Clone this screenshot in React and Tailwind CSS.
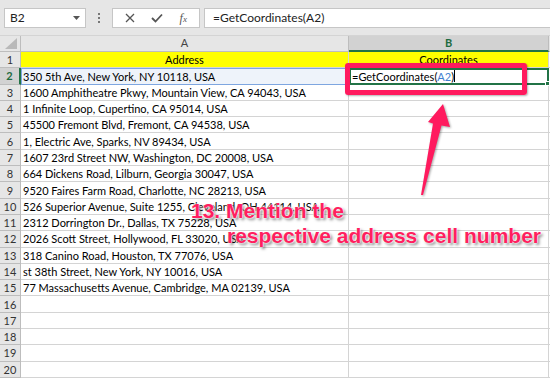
const rows = [
  "350 5th Ave, New York, NY 10118, USA",
  "1600 Amphitheatre Pkwy, Mountain View, CA 94043, USA",
  "1 Infinite Loop, Cupertino, CA 95014, USA",
  "45500 Fremont Blvd, Fremont, CA 94538, USA",
  "1, Electric Ave, Sparks, NV 89434, USA",
  "1607 23rd Street NW, Washington, DC 20008, USA",
  "664 Dickens Road, Lilburn, Georgia 30047, USA",
  "9520 Faires Farm Road, Charlotte, NC 28213, USA",
  "526 Superior Avenue, Suite 1255, Cleveland, OH 44114, USA",
  "2312 Dorrington Dr., Dallas, TX 75228, USA",
  "2026 Scott Street, Hollywood, FL 33020, USA",
  "318 Canino Road, Houston, TX 77076, USA",
  "st 38th Street, New York, NY 10016, USA",
  "77 Massachusetts Avenue, Cambridge, MA 02139, USA",
  "",
  "",
  "",
  "",
  "",
];

function Toolbar() {
  return (
    <div className="h-[36px] bg-[#e6e6e6] border-b border-[#d4d4d4] flex items-start pt-2 pl-1 text-[#222]">
      <div className="w-[82px] h-[20px] bg-white border border-[#c6c6c6] flex items-center justify-between pl-[5px] pr-[5px] text-[12px]">
        <span>B2</span>
        <svg width="7" height="4" viewBox="0 0 7 4">
          <path d="M0 0 L7 0 L3.5 4 Z" fill="#555" />
        </svg>
      </div>
      <div className="w-[26px] h-[20px] flex flex-col items-center justify-center gap-[2px]">
        <span className="w-[2px] h-[2px] bg-[#777]" />
        <span className="w-[2px] h-[2px] bg-[#777]" />
        <span className="w-[2px] h-[2px] bg-[#777]" />
      </div>
      <div className="w-[88px] h-[20px] bg-white border border-[#c6c6c6] flex items-center justify-around px-1">
        <svg width="10" height="10" viewBox="0 0 10 10">
          <path d="M1 1 L9 9 M9 1 L1 9" stroke="#555" strokeWidth="1.3" />
        </svg>
        <svg width="12" height="10" viewBox="0 0 12 10">
          <path d="M1 5 L4.5 8.5 L11 1.5" stroke="#555" strokeWidth="1.8" fill="none" />
        </svg>
        <span className="font-['Liberation_Serif'] italic text-[12px] text-[#555] leading-none">
          f<span className="text-[9px]">x</span>
        </span>
      </div>
      <div className="flex-1 h-[20px] ml-[4px] bg-white border border-[#c6c6c6] border-r-0 flex items-center pl-[8px] text-[12px]">
        =GetCoordinates(A2)
      </div>
    </div>
  );
}

function HeaderRow() {
  return (
    <div className="h-[16px] flex bg-[#e6e6e6] text-[11px]">
      <div className="w-[21px] border-r border-b border-[#bdbdbd] relative">
        <svg className="absolute right-[3px] bottom-[2px]" width="12" height="11" viewBox="0 0 12 11">
          <path d="M12 0 L12 11 L0 11 Z" fill="#b9b9b9" />
        </svg>
      </div>
      <div className="w-[328px] border-r border-b border-[#bdbdbd] flex items-center justify-center text-[#444]">
        A
      </div>
      <div className="w-[200px] bg-[#d2d2d2] border-r border-[#bdbdbd] border-b-2 border-b-[#217346] flex items-center justify-center text-[#1d6b3f] font-bold">
        B
      </div>
      <div className="flex-1 border-b border-[#bdbdbd]" />
    </div>
  );
}

function Row({ n, text }) {
  const selected = n === 2;
  return (
    <div className="h-[16.3px] flex text-[11px] leading-none">
      <div
        className={
          selected
            ? "w-[21px] bg-[#d2d2d2] border-b border-[#bdbdbd] border-r-2 border-r-[#217346] flex items-center justify-center text-[#1d6b3f] font-bold"
            : "w-[21px] bg-[#e6e6e6] border-b border-r border-[#bdbdbd] flex items-center justify-center text-[#333]"
        }
      >
        {n}
      </div>
      {n === 1 ? (
        <>
          <div className="w-[328px] bg-[#ffff00] border-r border-b border-[#d4d4d4] flex items-center justify-center">
            Address
          </div>
          <div className="w-[200px] bg-[#ffff00] border-r border-b border-[#d4d4d4] flex items-center justify-center">
            Coordinates
          </div>
        </>
      ) : selected ? (
        <>
          <div className="w-[328px] bg-[#eef3fa] border border-[#7ea6e0] flex items-center pl-[1px] whitespace-nowrap">
            {text}
          </div>
          <div className="w-[200px] bg-white border-2 border-[#217346] flex items-center pl-[1px] whitespace-nowrap relative">
            =GetCoordinates(<span className="text-[#3f7fd0]">A2</span>)
            <span className="w-[1px] h-[12px] bg-black" />
            <span className="absolute -right-[3px] -bottom-[3px] w-[5px] h-[5px] bg-[#217346] border border-white" />
          </div>
        </>
      ) : (
        <>
          <div className="w-[328px] border-r border-b border-[#d4d4d4] flex items-center pl-[2px] whitespace-nowrap">
            {text}
          </div>
          <div className="w-[200px] border-r border-b border-[#d4d4d4]" />
        </>
      )}
      <div className="flex-1 border-b border-[#d4d4d4]" />
    </div>
  );
}

export default function App() {
  return (
    <div className="w-[550px] h-[380px] overflow-hidden relative bg-white font-['Lato','Liberation_Sans',sans-serif] text-black">
      <Toolbar />
      <HeaderRow />
      <Row n={1} />
      {rows.map((t, i) => (
        <Row key={i} n={i + 2} text={t} />
      ))}

      {/* annotation box */}
      <div className="absolute left-[345px] top-[63px] w-[182px] h-[32px] border-[5px] border-[#ff1a5e] rounded-[3px] shadow-[1px_1px_2px_rgba(0,0,0,0.3)]" />

      {/* arrow */}
      <svg className="absolute left-0 top-0" width="550" height="380" viewBox="0 0 550 380">
        <path
          d="M443 104 L450 127 L441.5 125.5 L423 195 L421 195 L433 123.5 L428 122 Z"
          fill="#ff1a5e"
          style={{ filter: "drop-shadow(1px 1px 1px rgba(0,0,0,0.35))" }}
        />
      </svg>

      <div className="absolute left-[191px] top-[198px] text-[21px] leading-[25px] font-bold font-['Liberation_Sans',sans-serif] text-[#ff1f5f] whitespace-nowrap [text-shadow:0_0_2px_#fff,0_0_2px_#fff,2px_2px_3px_rgba(0,0,0,0.5)]">
        13. Mention the
      </div>
      <div className="absolute left-[227px] top-[223px] text-[21px] leading-[25px] font-bold font-['Liberation_Sans',sans-serif] text-[#ff1f5f] whitespace-nowrap [text-shadow:0_0_2px_#fff,0_0_2px_#fff,2px_2px_3px_rgba(0,0,0,0.5)]">
        respective address cell number
      </div>
    </div>
  );
}
